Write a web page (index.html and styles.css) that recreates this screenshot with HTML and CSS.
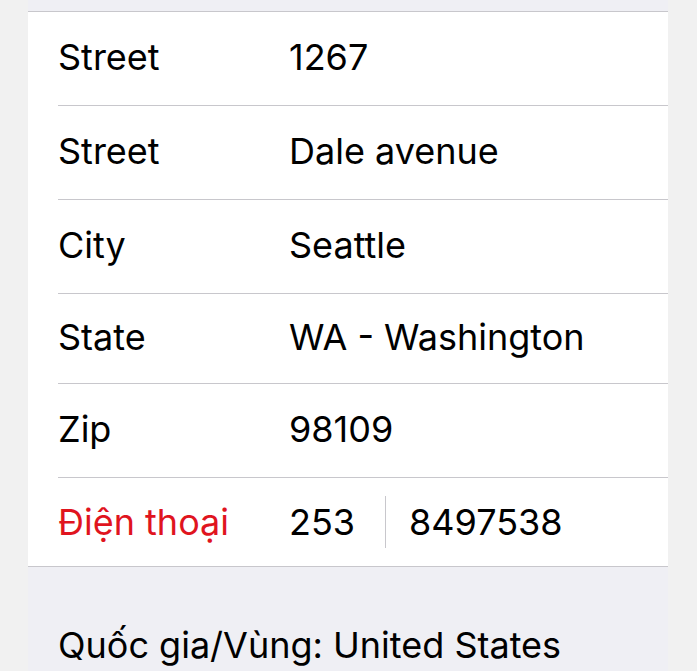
FILE: index.html
```html
<!DOCTYPE html>
<html lang="vi">
<head>
    <meta charset="UTF-8">
    <meta name="viewport" content="width=device-width, initial-scale=1.0">
    <title>Address</title>
    <link rel="stylesheet" href="styles.css">
</head>
<body>
    <div class="sheet">
        <div class="card">
            <div class="row tall">
                <div class="label">Street</div>
                <div class="value">1267</div>
            </div>
            <div class="row tall">
                <div class="label">Street</div>
                <div class="value">Dale avenue</div>
            </div>
            <div class="row tall">
                <div class="label">City</div>
                <div class="value">Seattle</div>
            </div>
            <div class="row short">
                <div class="label">State</div>
                <div class="value">WA - Washington</div>
            </div>
            <div class="row tall">
                <div class="label">Zip</div>
                <div class="value">98109</div>
            </div>
            <div class="row short last">
                <div class="label red">Điện thoại</div>
                <div class="value area">253</div>
                <div class="divider"></div>
                <div class="value number">8497538</div>
            </div>
        </div>
        <div class="footer">Quốc gia/Vùng: United States</div>
    </div>
</body>
</html>
```

FILE: styles.css
```css
body {
    margin: 0;
    background: #f1f1f1;
    font-family: 'Inter', 'Noto Sans', sans-serif;
    color: #000;
}
.sheet {
    margin: 0 29px 0 28px;
    background: #efeff4;
    padding-top: 11px;
    height: 660px;
}
.card {
    background: #fff;
    border-top: 1px solid #c8c7cc;
    border-bottom: 1px solid #c8c7cc;
    padding-left: 30px;
}
.row {
    box-sizing: border-box;
    display: flex;
    align-items: center;
    border-bottom: 1px solid #c8c7cc;
    padding-bottom: 4px;
    font-size: 36px;
}
.row.tall {
    height: 94px;
}
.row.short {
    height: 90px;
}
.row.last {
    border-bottom: none;
    padding-bottom: 0;
    height: 88px;
}
.label {
    width: 231px;
}
.red {
    color: #e0141e;
}
.area {
    width: 96px;
}
.divider {
    width: 1px;
    height: 52px;
    background: #c8c7cc;
    margin-right: 23px;
}
.footer {
    padding: 56px 0 0 30px;
    font-size: 36px;
}
```
